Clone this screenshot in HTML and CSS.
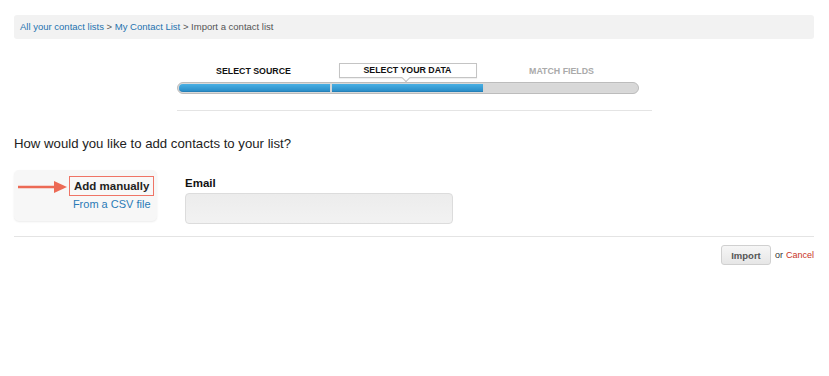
FILE: index.html
```html
<!DOCTYPE html>
<html>
<head>
<meta charset="utf-8">
<link rel="stylesheet" href="styles.css">
</head>
<body>
<div class="page">
  <div class="breadcrumb">
    <a href="#">All your contact lists</a> &gt; <a href="#">My Contact List</a> &gt; Import a contact list
  </div>

  <div class="wizard">
    <div class="steps">
      <div class="step done">Select source</div>
      <div class="step current"><span class="current-box">Select your data</span></div>
      <div class="step todo">Match fields</div>
    </div>
    <div class="bar">
      <div class="seg fill"></div>
      <div class="seg fill"></div>
      <div class="seg empty"></div>
    </div>
  </div>

  <h2 class="question">How would you like to add contacts to your list?</h2>

  <div class="form-row">
    <div class="choices">
      <svg class="arrow" width="50" height="14" viewBox="0 0 50 14">
        <line x1="0" y1="7" x2="38" y2="7" stroke="#ec6a55" stroke-width="2.5"/>
        <polygon points="36,1 49,7 36,13" fill="#ec6a55"/>
      </svg>
      <div class="choice-list">
        <span class="choice active">Add manually</span>
        <a href="#" class="choice link">From a CSV file</a>
      </div>
    </div>
    <div class="field">
      <label class="label">Email</label>
      <div class="input"></div>
    </div>
  </div>

  <div class="actions">
    <button class="btn">Import</button>
    <span class="or">or</span>
    <a href="#" class="cancel">Cancel</a>
  </div>
</div>
</body>
</html>
```

FILE: styles.css
```css
* { box-sizing: border-box; }
html, body { margin: 0; padding: 0; background: #fff; }
body {
  font-family: "Liberation Sans", Arial, Helvetica, sans-serif;
  color: #222;
}
.page {
  width: 800px;
  margin-left: 14px;
  padding-top: 15px;
}
a { text-decoration: none; color: #1f73b0; }

.breadcrumb {
  height: 24px;
  line-height: 23px;
  background: #f2f2f2;
  border-radius: 3px;
  padding-left: 6px;
  font-size: 9.5px;
  color: #555;
}

.wizard {
  width: 475px;
  margin: 24px auto 0;
  border-bottom: 1px solid #e4e4e4;
  padding-bottom: 16px;
}
.steps {
  display: flex;
  width: 462px;
  height: 19px;
}
.step {
  flex: 1;
  text-align: center;
  font-size: 8.8px;
  font-weight: bold;
  text-transform: uppercase;
  line-height: 14px;
  padding-top: 1px;
}
.step.done { color: #111; }
.step.todo { color: #aaa; }
.current-box {
  position: relative;
  display: block;
  width: 138px;
  margin: -1px auto 0 8px;
  height: 15px;
  line-height: 13px;
  border: 1px solid #c4c4c4;
  background: #fff;
  color: #111;
  box-shadow: 0 1px 1px rgba(0,0,0,0.06);
}
.current-box::after {
  content: "";
  position: absolute;
  left: 63px;
  bottom: -4px;
  width: 5px;
  height: 5px;
  background: #fff;
  border-right: 1px solid #c4c4c4;
  border-bottom: 1px solid #c4c4c4;
  transform: rotate(45deg);
}
.bar {
  display: flex;
  width: 462px;
  height: 12px;
  border: 1px solid #bcbcbc;
  border-radius: 6px;
  background: #d6d6d6;
  overflow: hidden;
  box-shadow: inset 0 0 0 1px #dadada;
  padding: 1px;
  gap: 2px;
}
.seg { flex: 1; }
.seg.fill {
  background: linear-gradient(#4ab0e4, #2b8ec8);
  border-bottom: 1px solid #2580b8;
}
.seg.fill:first-child { border-radius: 4px 0 0 4px; }
.seg.empty { background: #d8d8d8; }

.question {
  margin: 24px 0 0;
  font-size: 13.2px;
  font-weight: normal;
  color: #222;
  line-height: 18px;
}

.form-row {
  display: flex;
  margin-top: 17px;
  padding-bottom: 12px;
  border-bottom: 1px solid #e4e4e4;
}
.choices {
  width: 143px;
  height: 51px;
  background: #f7f7f7;
  border-radius: 5px;
  box-shadow: 0 1px 2px rgba(0,0,0,0.08);
  display: flex;
  align-items: flex-start;
  padding: 6px 0 0 4px;
}
.arrow { margin-top: 4px; margin-right: 1px; flex: none; }
.choice-list {
  display: flex;
  flex-direction: column;
  align-items: center;
}
.choice.active {
  display: block;
  border: 1px solid #ef7466;
  padding: 0 4px;
  height: 20px;
  line-height: 18px;
  font-size: 11.5px;
  font-weight: bold;
  color: #222;
  background: #f8f8f8;
}
.choice.link {
  font-size: 11px;
  line-height: 14px;
  margin-top: 1px;
  color: #2a7ab6;
}
.field {
  margin-left: 28px;
  padding-top: 6px;
}
.label {
  display: block;
  font-size: 11.5px;
  font-weight: bold;
  color: #111;
  line-height: 14px;
}
.input {
  margin-top: 3px;
  width: 268px;
  height: 31px;
  border: 1px solid #dcdcdc;
  border-radius: 4px;
  background: linear-gradient(#ececec, #f2f2f2);
}

.actions {
  display: flex;
  justify-content: flex-end;
  align-items: center;
  margin-top: 8px;
  font-size: 9px;
}
.btn {
  font-family: inherit;
  width: 50px;
  height: 20px;
  font-size: 9.5px;
  font-weight: bold;
  color: #555;
  border: 1px solid #d0d0d0;
  border-radius: 3px;
  background: linear-gradient(#f6f6f6, #e6e6e6);
  padding: 0;
}
.or { margin-left: 4px; color: #333; }
.cancel { margin-left: 3px; color: #c8321d; }
```
